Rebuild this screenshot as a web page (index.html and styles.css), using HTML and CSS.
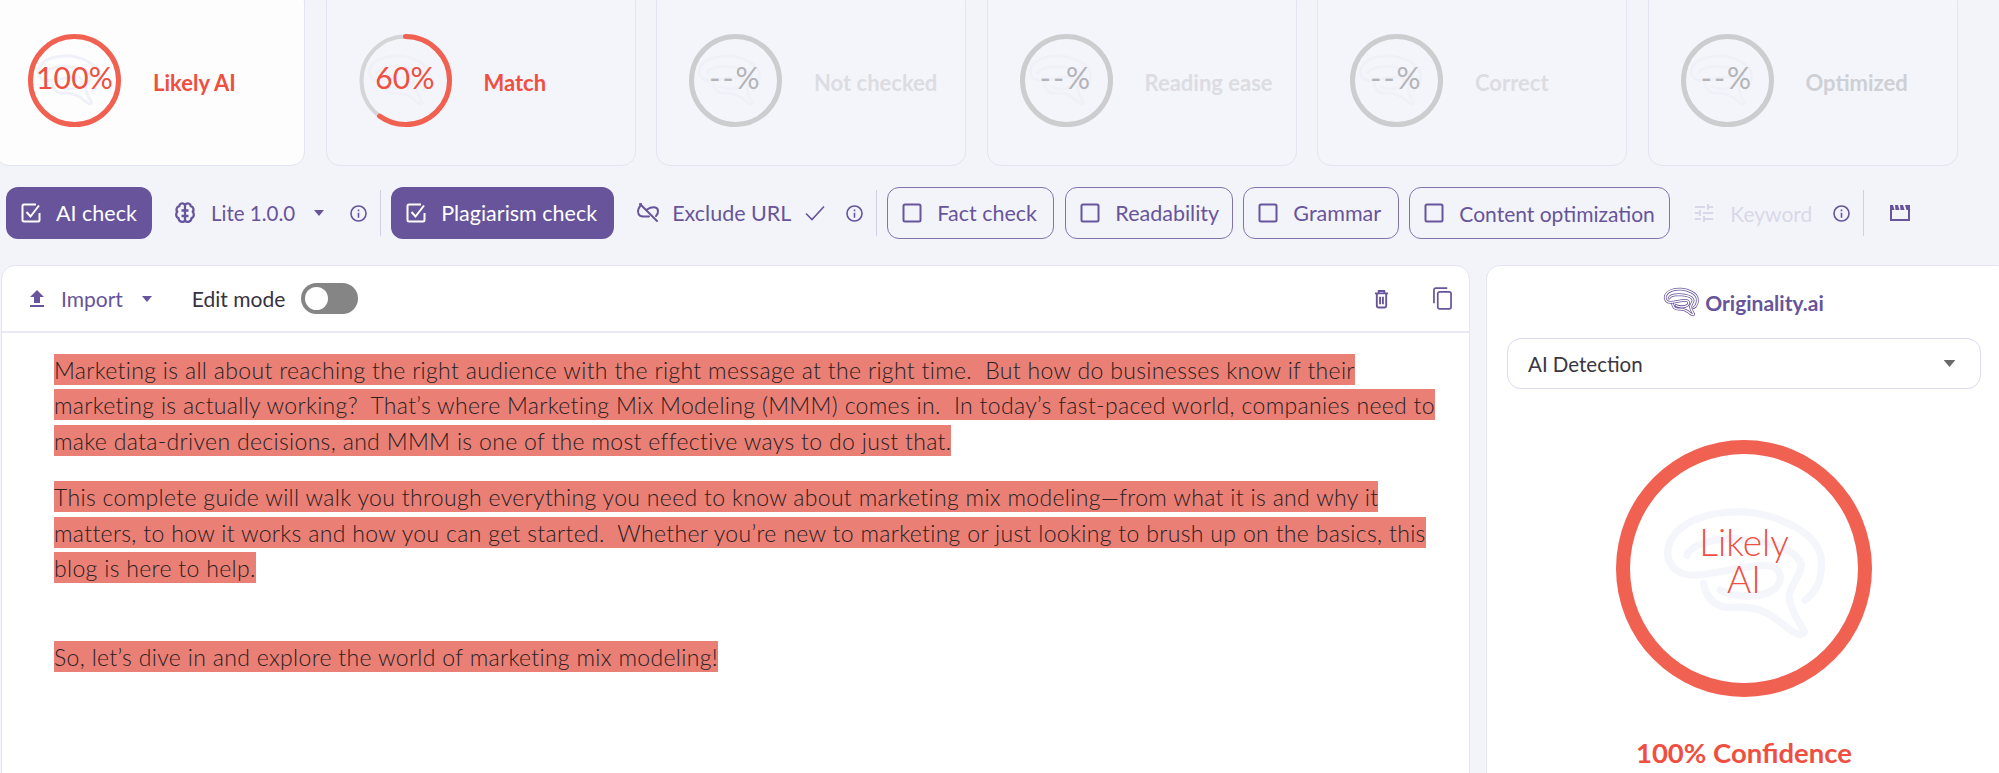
FILE: index.html
```html
<!DOCTYPE html>
<html lang="en">
<head>
<meta charset="utf-8">
<title>Originality.ai</title>
<link rel="stylesheet" href="styles.css">
</head>
<body>
<svg class="defs" width="0" height="0" aria-hidden="true">
  <defs>
    <symbol id="brain" viewBox="235 245 520 430">
      <path fill="none" stroke-linecap="round" stroke-linejoin="round" d="M680 540C715 515 735 470 728 410C715 340 610 285 500 275C400 270 300 300 272 370C255 420 285 465 345 465C420 462 500 432 570 436C610 442 615 480 590 505C550 535 470 535 425 510M325 405C335 375 400 355 470 355C560 358 650 385 668 430C672 465 635 490 632 530C635 570 665 610 678 635C670 655 640 635 610 610C570 575 530 558 470 562C420 565 385 545 375 490"/>
    </symbol>
    <symbol id="box" viewBox="0 0 24 24">
      <rect x="3.5" y="3.5" width="17" height="17" rx="1.5" fill="none" stroke="currentColor" stroke-width="2"/>
    </symbol>
    <symbol id="boxcheck" viewBox="0 0 24 24">
      <path fill="none" stroke="currentColor" stroke-width="2" d="M20.500 12v7a1.500 1.500 0 0 1-1.500 1.500H5A1.500 1.500 0 0 1 3.500 19V5A1.500 1.500 0 0 1 5 3.500h12"/>
      <path fill="none" stroke="currentColor" stroke-width="2" d="M7.500 11l4 4.500L20 4.500"/>
    </symbol>
    <symbol id="info" viewBox="0 0 24 24">
      <circle cx="12" cy="12" r="9.500" fill="none" stroke="currentColor" stroke-width="2"/>
      <path fill="currentColor" d="M11 11h2v6.500h-2zM11 6.800h2v2.200h-2z"/>
    </symbol>
    <symbol id="caret" viewBox="0 0 10 6">
      <path fill="currentColor" d="M0 0h10L5 6z"/>
    </symbol>
  </defs>
</svg>

<section class="cards">
  <article class="card card-active">
    <div class="ring">
      <svg class="ring-svg" viewBox="0 0 93 93"><circle class="ring-track ring-red" cx="46.500" cy="46.500" r="44"/></svg>
      <svg class="ring-brain"><use href="#brain"/></svg>
      <span class="ring-text ring-text-red">100%</span>
    </div>
    <span class="card-label label-red">Likely AI</span>
  </article>
  <article class="card">
    <div class="ring">
      <svg class="ring-svg" viewBox="0 0 93 93"><circle class="ring-track ring-grey-thin" cx="46.500" cy="46.500" r="44"/><circle class="ring-track ring-red ring-sixty" cx="46.500" cy="46.500" r="44" pathLength="100"/></svg>
      <svg class="ring-brain"><use href="#brain"/></svg>
      <span class="ring-text ring-text-red">60%</span>
    </div>
    <span class="card-label label-red">Match</span>
  </article>
  <article class="card">
    <div class="ring">
      <svg class="ring-svg" viewBox="0 0 93 93"><circle class="ring-track ring-grey" cx="46.500" cy="46.500" r="44"/></svg>
      <svg class="ring-brain"><use href="#brain"/></svg>
      <span class="ring-text ring-text-grey">--%</span>
    </div>
    <span class="card-label label-muted">Not checked</span>
  </article>
  <article class="card">
    <div class="ring">
      <svg class="ring-svg" viewBox="0 0 93 93"><circle class="ring-track ring-grey" cx="46.500" cy="46.500" r="44"/></svg>
      <svg class="ring-brain"><use href="#brain"/></svg>
      <span class="ring-text ring-text-grey">--%</span>
    </div>
    <span class="card-label label-muted">Reading ease</span>
  </article>
  <article class="card">
    <div class="ring">
      <svg class="ring-svg" viewBox="0 0 93 93"><circle class="ring-track ring-grey" cx="46.500" cy="46.500" r="44"/></svg>
      <svg class="ring-brain"><use href="#brain"/></svg>
      <span class="ring-text ring-text-grey">--%</span>
    </div>
    <span class="card-label label-muted">Correct</span>
  </article>
  <article class="card">
    <div class="ring">
      <svg class="ring-svg" viewBox="0 0 93 93"><circle class="ring-track ring-grey" cx="46.500" cy="46.500" r="44"/></svg>
      <svg class="ring-brain"><use href="#brain"/></svg>
      <span class="ring-text ring-text-grey">--%</span>
    </div>
    <span class="card-label label-muted label-strong">Optimized</span>
  </article>
</section>

<nav class="toolbar">
  <button class="btn btn-on btn-ai"><svg class="ico-box"><use href="#boxcheck"/></svg>AI check</button>
  <div class="tool tool-lite">
    <svg class="ico" viewBox="0 0 24 24" fill="none" stroke="currentColor" stroke-width="2.300" stroke-linejoin="round"><path d="M12 4C10 1.300 6.500 2.300 6.300 5.200C3.500 5.700 2.700 9 4.300 10.800C2.300 12.800 3 16.300 5.600 17.200C5.600 20.300 10 22.300 12 19.500C14 22.300 18.400 20.300 18.400 17.200C21 16.300 21.700 12.800 19.700 10.800C21.300 9 20.500 5.700 17.700 5.200C17.500 2.300 14 1.300 12 4zM12 4V19.500M12 9.500H8.500M12 15H8.500M12 9.500H15.500M12 15H15.500"/></svg>
    <span class="tool-text tool-lite-text">Lite 1.0.0</span>
    <svg class="caret caret-lite"><use href="#caret"/></svg>
    <svg class="info info-lite"><use href="#info"/></svg>
  </div>
  <i class="divider"></i>
  <button class="btn btn-on btn-plag"><svg class="ico-box"><use href="#boxcheck"/></svg>Plagiarism check</button>
  <div class="tool tool-url">
    <svg class="ico" viewBox="0 0 24 24" fill="none" stroke="currentColor" stroke-width="2" stroke-linecap="round"><path d="M5 3L2.500 8C1 11 2.500 15.500 7 15.500H13M11 8.500C14 6.500 17 6 19.500 6.500C22.500 7.500 23 12 20 15M4 3L21 20"/></svg>
    <span class="tool-text tool-url-text">Exclude URL</span>
    <svg class="check" viewBox="0 0 20 16" fill="none" stroke="currentColor" stroke-width="1.600"><path d="M1 8.500L7 14.500L19 1.500"/></svg>
    <svg class="info info-url"><use href="#info"/></svg>
  </div>
  <i class="divider"></i>
  <button class="btn btn-off btn-fact"><svg class="ico-box"><use href="#box"/></svg>Fact check</button>
  <button class="btn btn-off btn-read"><svg class="ico-box"><use href="#box"/></svg>Readability</button>
  <button class="btn btn-off btn-gram"><svg class="ico-box"><use href="#box"/></svg>Grammar</button>
  <button class="btn btn-off btn-opt"><svg class="ico-box"><use href="#box"/></svg>Content optimization</button>
  <div class="tool tool-key">
    <svg class="ico ico-faded" viewBox="0 0 24 24" fill="currentColor"><path d="M3 17v2h6v-2H3zM3 5v2h10V5H3zm10 16v-2h8v-2h-8v-2h-2v6h2zM7 9v2H3v2h4v2h2V9H7zm14 4v-2H11v2h10zm-6-4h2V7h4V5h-4V3h-2v6z"/></svg>
    <span class="tool-text tool-key-text">Keyword</span>
    <svg class="info info-key"><use href="#info"/></svg>
  </div>
  <i class="divider"></i>
  <svg class="clapper" viewBox="0 0 20 16"><path fill="currentColor" d="M0 0H3L4.500 5H0zM5 0H8L9.500 5H5.500zM10 0H13L14.500 5H10.500zM15 0H20V5H16.500z"/><path fill="none" stroke="currentColor" stroke-width="2" d="M1 5V15H19V5"/></svg>
</nav>

<main class="panels">
  <section class="editor">
    <header class="editor-head">
      <svg class="ico-import" viewBox="0 0 24 24" fill="currentColor"><path d="M9 16h6v-6h4l-7-7-7 7h4zm-4 2h14v2H5z"/></svg>
      <span class="import-text">Import</span>
      <svg class="caret caret-import"><use href="#caret"/></svg>
      <span class="edit-text">Edit mode</span>
      <span class="toggle"><span class="knob"></span></span>
      <span class="head-spacer"></span>
      <svg class="ico-trash" viewBox="0 0 16 20" fill="none" stroke="currentColor" stroke-width="2"><path d="M1 4H15M3 4V17.500C3 18.300 3.700 19 4.500 19H11.500C12.300 19 13 18.300 13 17.500V4M5 4V1.500H11V4M6.500 7.500V15.500M9.500 7.500V15.500"/></svg>
      <svg class="ico-copy" viewBox="0 0 20 24" fill="none" stroke="currentColor" stroke-width="1.800"><path d="M15 1H3C1.900 1 1 1.900 1 3V17"/><rect x="5" y="5" width="14" height="18" rx="2"/></svg>
    </header>
    <div class="editor-body">
      <p class="para"><span class="mark">Marketing is all about reaching the right audience with the right message at the right time.&nbsp; But how do businesses know if their marketing is actually working?&nbsp; That’s where Marketing Mix Modeling (MMM) comes in.&nbsp; In today’s fast-paced world, companies need to make data-driven decisions, and MMM is one of the most effective ways to do just that.</span></p>
      <p class="para"><span class="mark">This complete guide will walk you through everything you need to know about marketing mix modeling—from what it is and why it matters, to how it works and how you can get started.&nbsp; Whether you’re new to marketing or just looking to brush up on the basics, this blog is here to help.</span></p>
      <p class="para para-gap"><span class="mark">So, let’s dive in and explore the world of marketing mix modeling!</span></p>
    </div>
  </section>
  <aside class="side">
    <div class="logo">
      <svg class="logo-brain"><use class="logo-outer" href="#brain"/><use class="logo-inner" href="#brain"/></svg>
      <span>Originality.ai</span>
    </div>
    <div class="select"><span>AI Detection</span><svg class="caret caret-select"><use href="#caret"/></svg></div>
    <div class="big-ring">
      <svg class="big-brain"><use href="#brain"/></svg>
      <span class="big-text">Likely<br>AI</span>
    </div>
    <p class="confidence">100% Confidence</p>
  </aside>
</main>
</body>
</html>
```

FILE: styles.css
```css
* { box-sizing: border-box; }
html, body { margin: 0; height: 773px; overflow: hidden; }
body { background: #f3f4f9; font-family: "Lato", "Liberation Sans", sans-serif; color: #67549b; }
.defs { position: absolute; }

.cards { display: flex; gap: 20.5px; margin: -12px 0 0 -5px; height: 178px; }
.card { flex: 0 0 310px; height: 178px; padding: 45px 0 0 32px; display: flex; align-items: flex-start; border: 1px solid #e3e3f3; border-radius: 14px; background: #f4f5fa; }
.card-active { background: #fdfdfe; }
.ring { position: relative; width: 93px; height: 93px; flex: none; display: flex; align-items: center; justify-content: center; }
.ring-svg { position: absolute; inset: 0; width: 93px; height: 93px; }
.ring-track { fill: none; stroke-width: 5; }
.ring-red { stroke: #f06152; }
.ring-grey { stroke: #cdcdd0; }
.ring-grey-thin { stroke: #d5d5d8; stroke-width: 4; }
.ring-sixty { stroke-dasharray: 60 100; stroke-linecap: round; transform: rotate(-90deg); transform-origin: 46.5px 46.5px; }
.ring-brain { position: absolute; left: 6px; top: 18px; width: 68px; height: 56px; fill: none; stroke: #f0f1f8; stroke-width: 22; }
.ring-text { position: relative; font-size: 30px; line-height: 1; margin-top: -8px; letter-spacing: 0.2px; }
.ring-text-red { color: #ef4f41; }
.ring-text-grey { color: #b4b4b8; letter-spacing: 2px; }
.card-label { margin: 37px 0 0 32px; font-size: 22px; line-height: 24px; font-weight: 700; }
.label-red { color: #ef4f41; }
.label-muted { color: #dcdce2; }
.label-strong { color: #cfcfd6; }

.toolbar { display: flex; align-items: center; height: 52px; margin: 21px 0 0 6px; }
.btn { height: 52px; display: flex; align-items: center; padding: 0 0 0 13px; border-radius: 12px; font: 400 21.5px "Lato", sans-serif; flex: none; }
.btn-on { background: #67549b; color: #fff; border: 0; }
.btn-off { background: transparent; color: #67549b; border: 1px solid #8373ad; }
.ico-box { width: 24px; height: 24px; margin-right: 13px; flex: none; }
.btn-ai { width: 146px; }
.btn-plag { width: 223px; margin-left: 10px; }
.btn-fact { width: 167px; margin-left: 10px; padding-left: 12px; }
.btn-read { width: 168px; margin-left: 11px; padding-left: 12px; }
.btn-gram { width: 156px; margin-left: 10px; padding-left: 12px; }
.btn-opt { width: 261px; margin-left: 10px; padding-left: 12px; font-size: 21px; }

.tool { display: flex; align-items: center; flex: none; height: 52px; }
.ico { width: 24px; height: 24px; flex: none; }
.tool-text { font-size: 21.5px; }
.tool-lite { margin-left: 21px; }
.tool-lite-text { margin-left: 14px; font-size: 20.5px; }
.caret { width: 10px; height: 6px; flex: none; }
.caret-lite { margin-left: 19px; }
.info { width: 19px; height: 19px; flex: none; }
.info-lite { margin-left: 25px; }
.divider { width: 1px; height: 46px; background: #d2cfe4; margin-left: 12px; flex: none; }
.tool-url { margin-left: 22px; }
.tool-url-text { margin-left: 12px; }
.check { width: 20px; height: 16px; margin-left: 14px; flex: none; }
.info-url { margin-left: 20px; }
.tool-key { margin-left: 22px; }
.ico-faded { color: #d9d8e8; }
.tool-key-text { margin-left: 14px; color: #d9d8e8; font-size: 21px; }
.info-key { margin-left: 20px; }
.clapper { width: 20px; height: 16px; margin-left: 26px; flex: none; }

.panels { display: flex; gap: 16px; margin: 26px -12px 0 1px; height: 520px; }
.editor { flex: 0 0 1469px; background: #fff; border: 1px solid #e4e4f2; border-radius: 14px 14px 0 0; }
.editor-head { display: flex; align-items: center; height: 67px; padding: 0 17px 0 26px; border-bottom: 2px solid #e9e8f4; }
.ico-import { width: 24px; height: 24px; margin-left: -3px; flex: none; }
.import-text { margin-left: 12px; font-size: 21px; }
.caret-import { margin-left: 19px; }
.edit-text { margin-left: 40px; font-size: 21px; color: #36323f; }
.toggle { margin-left: 16px; width: 57px; height: 31px; border-radius: 16px; background: #858585; padding: 4px; flex: none; }
.knob { display: block; width: 23px; height: 23px; border-radius: 50%; background: #fff; }
.head-spacer { flex: 1; }
.ico-trash { width: 15px; height: 20px; margin-right: 44px; flex: none; }
.ico-copy { width: 19px; height: 23px; flex: none; }
.editor-body { padding: 19px 0 0 52px; width: 1445px; }
.para { margin: 0 0 21px; font-size: 23px; font-weight: 300; line-height: 35.5px; letter-spacing: 0.33px; color: #2a2122; }
.para-gap { margin-top: 53px; }
.mark { background: #e97f75; padding: 1.5px 0; }

.side { flex: 1; background: #fff; border: 1px solid #e4e4f2; border-radius: 14px 14px 0 0; padding: 0 29px 0 20px; }
.logo { display: flex; justify-content: center; align-items: center; gap: 5px; height: 72px; padding-right: 2px; font-size: 21px; font-weight: 700; }
.logo-brain { width: 38px; height: 30px; fill: none; }
.logo-outer { stroke: #67549b; stroke-width: 40; }
.logo-inner { stroke: #fff; stroke-width: 18; }
.select { height: 51px; display: flex; align-items: center; justify-content: space-between; padding: 0 24px 0 20px; border: 1px solid #dcdaee; border-radius: 14px; font-size: 20.5px; color: #3b3640; }
.caret-select { width: 13px; height: 7px; color: #6a6a6a; }
.big-ring { position: relative; width: 256px; height: 257px; margin: 51px auto 0; border: 14px solid #f06152; border-radius: 50%; display: flex; align-items: center; justify-content: center; }
.big-brain { position: absolute; left: 27px; top: 48px; width: 173px; height: 143px; fill: none; stroke: #f5f6fb; stroke-width: 22; }
.big-text { position: relative; text-align: center; font-size: 37px; line-height: 37px; color: #ef4f41; font-weight: 300; margin-top: -18px; }
.confidence { margin: 41px 0 0; text-align: center; font-size: 27.5px; line-height: 30px; font-weight: 700; color: #ef4f41; }
```
